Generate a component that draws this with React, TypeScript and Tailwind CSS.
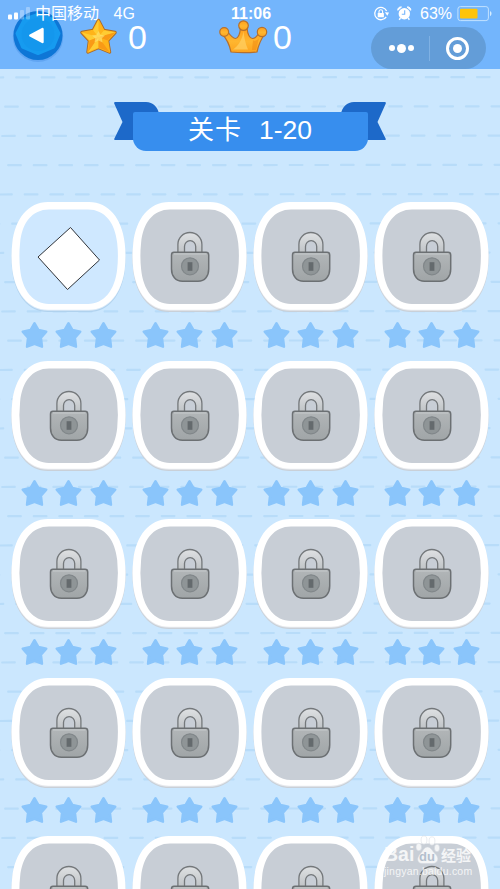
import React from 'react';

interface Level {
  id: number;
  locked: boolean;
}

const levels: Level[] = Array.from({ length: 20 }, (_, i) => ({ id: i + 1, locked: i > 0 }));

const offsets = [5, 16, 19, 13, 22, 9];
const dashRows = Array.from({ length: 28 }, (_, i) => ({ y: 77.5 + i * 29.25, offset: offsets[i % 6] }));

const CARD_PATH =
  'M37 0H78C98 0 111 17 113.7 41Q115.2 54 113.7 67C111 90 98 107.8 78 107.8H37C17 107.8 4 90 1.3 67Q-.2 54 1.3 41C4 17 17 0 37 0Z';
const CARD_INNER =
  'M38 7.5H77C94 7.5 104 21 106.2 41Q107.6 54 106.2 67C104 88 93 102 77 102H38C22 102 11 88 9.1 67Q7.7 54 9.1 41C11 21 21 7.5 38 7.5Z';
const GOLD_STAR_PATH =
  'M18.5 2.5L23.8 12.5L35 14.5L27.5 22.5L29.5 34L18.5 29.5L8 34L9.5 22.5L2 14.5L13.2 12.5Z';

const Backdrop = () => (
  <svg className="absolute inset-0" width="500" height="889" fill="none">
    {dashRows.map((row) => (
      <line
        key={row.y}
        x1="-30"
        x2="500"
        y1={row.y}
        y2={row.y - 0.4}
        stroke="#b3daf8"
        strokeWidth="2.2"
        strokeLinecap="round"
        strokeDasharray="12.6 13"
        strokeDashoffset={row.offset}
        opacity="0.8"
      />
    ))}
  </svg>
);

const Defs = () => (
  <svg className="absolute size-0">
    <defs>
      <linearGradient id="crownGold" x1="0" y1="0" x2="0" y2="1">
        <stop offset="0" stopColor="#ff9f1c" />
        <stop offset=".55" stopColor="#ffb62f" />
        <stop offset="1" stopColor="#fda31d" />
      </linearGradient>
      <linearGradient id="lockBody" x1="0" y1="0" x2="0" y2="1">
        <stop offset="0" stopColor="#b2b6b8" />
        <stop offset="1" stopColor="#a0a5a7" />
      </linearGradient>
      <linearGradient id="shackle" x1="0" y1="0" x2="0" y2="1">
        <stop offset="0" stopColor="#dfe1e3" />
        <stop offset="1" stopColor="#bfc3c6" />
      </linearGradient>
    </defs>
  </svg>
);

const StatusBar = () => (
  <div className="absolute inset-x-0 top-0 h-7 text-white">
    <svg className="absolute left-[8px] top-[7px]" width="24" height="13" fill="#fff">
      <rect x="0" y="7.5" width="4" height="5" rx="1" />
      <rect x="6" y="5.5" width="4" height="7" rx="1" />
      <rect x="12" y="3" width="4" height="9.5" rx="1" opacity=".3" />
      <rect x="18" y="0" width="4" height="12.5" rx="1" opacity=".3" />
    </svg>
    <span className="absolute left-[35px] top-[3px] text-[16px] leading-[21px]">中国移动</span>
    <span className="absolute left-[113.5px] top-[3px] text-[16px] leading-[21px]">4G</span>
    <span className="absolute left-[231px] top-[4px] text-[16px] font-semibold leading-[20px]">11:06</span>
    <svg className="absolute left-[373px] top-[6px]" width="17" height="16" fill="none" stroke="#fff" strokeWidth="1.3">
      <path d="M13.6 5A6.2 6.2 0 1 0 13.2 10.8" />
      <path d="M11.8 6.2L16 6.5L14.4 9.7Z" fill="#fff" stroke="none" />
      <rect x="4.7" y="6.9" width="6.2" height="4.3" rx=".5" fill="#fff" stroke="none" />
      <path d="M6 7V5.6a1.8 1.8 0 0 1 3.6 0V7" strokeWidth="1.1" />
    </svg>
    <svg className="absolute left-[397px] top-[6px]" width="15" height="15" fill="#fff">
      <circle cx="7.3" cy="7.8" r="5.7" />
      <path d="M.8 4.3A3 3 0 0 1 4.5 1L.8 4.3ZM13.8 4.3A3 3 0 0 0 10.1 1l3.7 3.3Z" stroke="#fff" />
      <path d="M3.5 12l-1.3 1.7M11.1 12l1.3 1.7" stroke="#fff" strokeWidth="1.4" />
      <path d="M7.7 4.2v4H4.8" stroke="#73b5fc" strokeWidth="1.1" fill="none" />
    </svg>
    <span className="absolute left-[420px] top-[4px] text-[16px] leading-[20px]">63%</span>
    <svg className="absolute left-[457px] top-[6px]" width="36" height="16" fill="none">
      <rect x=".9" y=".6" width="30.5" height="14" rx="2.5" stroke="#c2e2ff" />
      <rect x="3" y="2.8" width="17.5" height="9.8" rx="1" fill="#ffc409" />
      <path d="M33 5.3c2 .3 2 4.3 0 4.7Z" fill="#d5edff" />
    </svg>
  </div>
);

const BackButton = () => (
  <svg width="54" height="54" viewBox="0 0 54 54">
    <circle cx="27" cy="27.8" r="25.2" fill="#3e86df" opacity=".35" />
    <circle cx="27" cy="26.5" r="24.5" fill="#0e76d6" />
    <path
      d="M27 5.5L40.5 10L48 24.5L42.5 38L27 44.5L11.5 38L6 24.5L13.5 10Z"
      fill="#169bf0"
      stroke="#169bf0"
      strokeWidth="3"
      strokeLinejoin="round"
    />
    <circle cx="27" cy="25.5" r="16.5" fill="#1497ed" />
    <path d="M19.3 26.5L31.5 20V33Z" fill="#fff" stroke="#fff" strokeWidth="2.4" strokeLinejoin="round" />
  </svg>
);

const GoldStar = () => (
  <svg width="37" height="37" viewBox="0 0 37 37" strokeLinejoin="round">
    <path d={GOLD_STAR_PATH} fill="#ffb51b" stroke="#a96a2c" strokeWidth="3.4" />
    <path d={GOLD_STAR_PATH} fill="#ffb41a" stroke="#ffb41a" strokeWidth="1.6" />
    <path d="M18.5 2L13.2 12.5L18.5 19ZM35 14.5L23.8 12.5L18.5 19ZM2 14.5L9.5 22.5L18.5 19ZM8 34L18.5 29.5V19Z" fill="#ffcc33" />
    <path d="M35 14.5L27.5 22.5L18.5 19ZM29.5 34L18.5 29.5V19ZM8 34L9.5 22.5L18.5 19Z" fill="#f99a16" />
    <path d="M18.5 13L20.5 16.8L25 17.4L21.8 20.3L22.5 24.5L18.5 22.4L14.5 24.5L15.2 20.3L12 17.4L16.5 16.8Z" fill="#ffe572" opacity=".65" />
  </svg>
);

const Crown = () => (
  <svg width="50" height="34" viewBox="0 0 50 34">
    <g fill="url(#crownGold)" stroke="#b5702e" strokeWidth="1.2" strokeLinejoin="round">
      <path d="M12 32C10.5 25 8 19 3.5 14.5L8.5 11.5C11 15 13.5 18.5 16.5 18.5C20 18 21 13 21.5 8H28C28.5 13 30 18 33.5 18.5C37 18.5 39 15 41 11L46 14C42 19 39.5 25 38 32Q25 33.3 12 32Z" />
      <circle cx="5.2" cy="12" r="4.4" />
      <circle cx="24.5" cy="5.6" r="4.8" />
      <circle cx="43" cy="12" r="4.7" />
    </g>
    <path d="M24.5 11C23.5 19 19.5 26 14 29.5H29C26.5 24 25 17 24.5 11Z" fill="#ffcf62" opacity=".75" />
    <path d="M34 20.5C37 21 38.5 20 40 18.5L37 30H33Z" fill="#f08a10" opacity=".55" />
  </svg>
);

const Header = () => (
  <header className="relative h-[69px] bg-[#73b5fc] font-['Liberation_Sans','Noto_Sans_CJK_SC',sans-serif]">
    <div className="flex h-[69px] items-start">
      <div className="ml-[11px] mt-[9px]">
        <BackButton />
      </div>
      <div className="ml-[15px] mt-[18px]">
        <GoldStar />
      </div>
      <span className="ml-[11px] mt-[18px] w-[18px] text-[34px] leading-[38px] text-white">0</span>
      <div className="ml-[73px] mt-[20px]">
        <Crown />
      </div>
      <span className="ml-[4px] mt-[18px] w-[18px] text-[34px] leading-[38px] text-white">0</span>
    </div>
    <div className="absolute left-[371px] top-[27px] flex h-[42px] w-[115px] items-center rounded-full bg-[#639dd8] text-white">
      <div className="flex w-[58px] items-center justify-center gap-[2px] pl-[2px]">
        <span className="size-[6px] rounded-full bg-white" />
        <span className="size-[9px] rounded-full bg-white" />
        <span className="size-[6px] rounded-full bg-white" />
      </div>
      <div className="h-[25px] w-px bg-[#7fb1e4]" />
      <div className="flex w-[55px] justify-center">
        <span className="flex size-[23px] items-center justify-center rounded-full border-[3px] border-white">
          <span className="size-[9px] rounded-full bg-white" />
        </span>
      </div>
    </div>
    <StatusBar />
  </header>
);

const Banner = () => (
  <div className="relative mx-auto mt-[33px] h-[50px] w-[272px]">
    <svg className="absolute inset-0" width="272" height="50" fill="#1d69c9">
      <path d="M1 0H32C39 0 44 5 45 12V38H1Q-.3 38 .4 36.5L8.5 20L.2 1.5Q0 0 1 0Z" />
      <path d="M271 0H240C233 0 228 5 227 12V38H271Q272.3 38 271.6 36.5L263.5 20L271.8 1.5Q272 0 271 0Z" />
    </svg>
    <h1 className="absolute left-[18.5px] top-[10px] flex h-[39px] w-[235px] justify-center gap-[17px] rounded-t-[2px] rounded-b-[13px] bg-[#378eee] font-['Liberation_Sans','Noto_Sans_CJK_SC',sans-serif] text-[26px] leading-[37px] text-white">
      <span className="tracking-[1px]">关卡</span>
      <span className="text-[26.5px]">1-20</span>
    </h1>
  </div>
);

const Lock = () => (
  <g strokeLinejoin="round">
    <path
      d="M45.9 51V42.5A12 12 0 0 1 69.9 42.5V51H63.7V44.5A5.6 5.9 0 0 0 52.5 44.5V51Z"
      fill="url(#shackle)"
      stroke="#74787b"
      strokeWidth="1.3"
    />
    <path
      d="M42 50.3H74Q76.7 50.3 76.7 53V67C76.7 74 73 79.3 66 79.3H50.5C43.5 79.3 39.5 74 39.5 67V53Q39.5 50.3 42 50.3Z"
      fill="url(#lockBody)"
      stroke="#6c7073"
      strokeWidth="1.5"
    />
    <path d="M42 52H74.5" stroke="#c5c9cb" strokeWidth="1.2" />
    <circle cx="58" cy="64.3" r="8.5" fill="#8f9597" stroke="#81878a" strokeWidth="1.2" />
    <rect x="55.6" y="60.2" width="4.8" height="8.6" fill="#646a6d" />
  </g>
);

const SmallStar = () => (
  <svg width="27" height="28" viewBox="0 0 27 28">
    <path
      d="M13.5 2.2L17.5 9L25.3 10.6L20 16.8L21 25.7L13.5 22.8L6 25.7L7 16.8L1.7 10.6L9.5 9Z"
      fill="#8ac5fb"
      stroke="#8ac5fb"
      strokeWidth="2.4"
      strokeLinejoin="round"
    />
  </svg>
);

const LevelCard: React.FC<{ level: Level }> = ({ level }) => (
  <div className="h-[158.6px]">
    <svg width="116" height="113" viewBox="0 0 116 113" className="block">
      <path d={CARD_PATH} transform="translate(0 2.2)" fill={level.locked ? '#c9d0d8' : '#b0d2ee'} />
      <path d={CARD_PATH} transform="translate(0 1)" fill={level.locked ? '#e6e8ec' : '#d9e9f8'} />
      <path d={CARD_PATH} fill="#fff" />
      <path d={CARD_INNER} fill={level.locked ? '#c8ced6' : '#cfe8ff'} />
      {level.locked ? (
        <Lock />
      ) : (
        <path d="M59.5 25.5L88.5 58L56.5 87.5L27 55Z" fill="#fff" stroke="#30343a" strokeWidth="1" />
      )}
    </svg>
    <div className="ml-[9.5px] mt-[5.5px] flex gap-[7.7px]">
      <SmallStar />
      <SmallStar />
      <SmallStar />
    </div>
  </div>
);

const Watermark = () => (
  <div className="absolute left-[384px] top-[834px] h-[48px] w-[92px] font-['Liberation_Sans','Noto_Sans_CJK_SC',sans-serif] text-white opacity-80">
    <svg className="absolute left-[31px] top-[1px]" width="26" height="30" fill="#fff" stroke="#d5dae0" strokeWidth=".6">
      <ellipse cx="3.8" cy="12" rx="2.8" ry="3.8" />
      <ellipse cx="9" cy="5" rx="2.9" ry="4.2" />
      <ellipse cx="17" cy="6" rx="2.9" ry="4.2" />
      <ellipse cx="22" cy="13" rx="2.6" ry="3.8" />
      <path d="M12.5 12C16 12 17 16 20 18.5C25 23 23 29 17 28.5H8C2 29 1 23 5.5 18.5C8 16 9 12 12.5 12Z" />
    </svg>
    <span className="absolute left-0 top-[9px] text-[19.5px] font-bold leading-[22px]">Bai</span>
    <span className="absolute left-[35px] top-[15px] text-[13px] font-bold leading-[15px] text-[#aebccb]">du</span>
    <span className="absolute left-[57px] top-[13px] whitespace-nowrap text-[15px] font-bold leading-[18px]">经验</span>
    <span className="absolute left-0 top-[30px] text-[10.5px] leading-[14px] tracking-[0.22px]">jingyan.baidu.com</span>
  </div>
);

export default function App() {
  return (
    <main className="relative h-[889px] w-[500px] overflow-hidden bg-[#cbe7fe]">
      <Defs />
      <Backdrop />
      <div className="relative">
        <Header />
        <Banner />
        <section className="ml-[11px] mt-[50px] grid w-[484px] grid-cols-4">
          {levels.map((level) => (
            <LevelCard key={level.id} level={level} />
          ))}
        </section>
      </div>
      <Watermark />
    </main>
  );
}
